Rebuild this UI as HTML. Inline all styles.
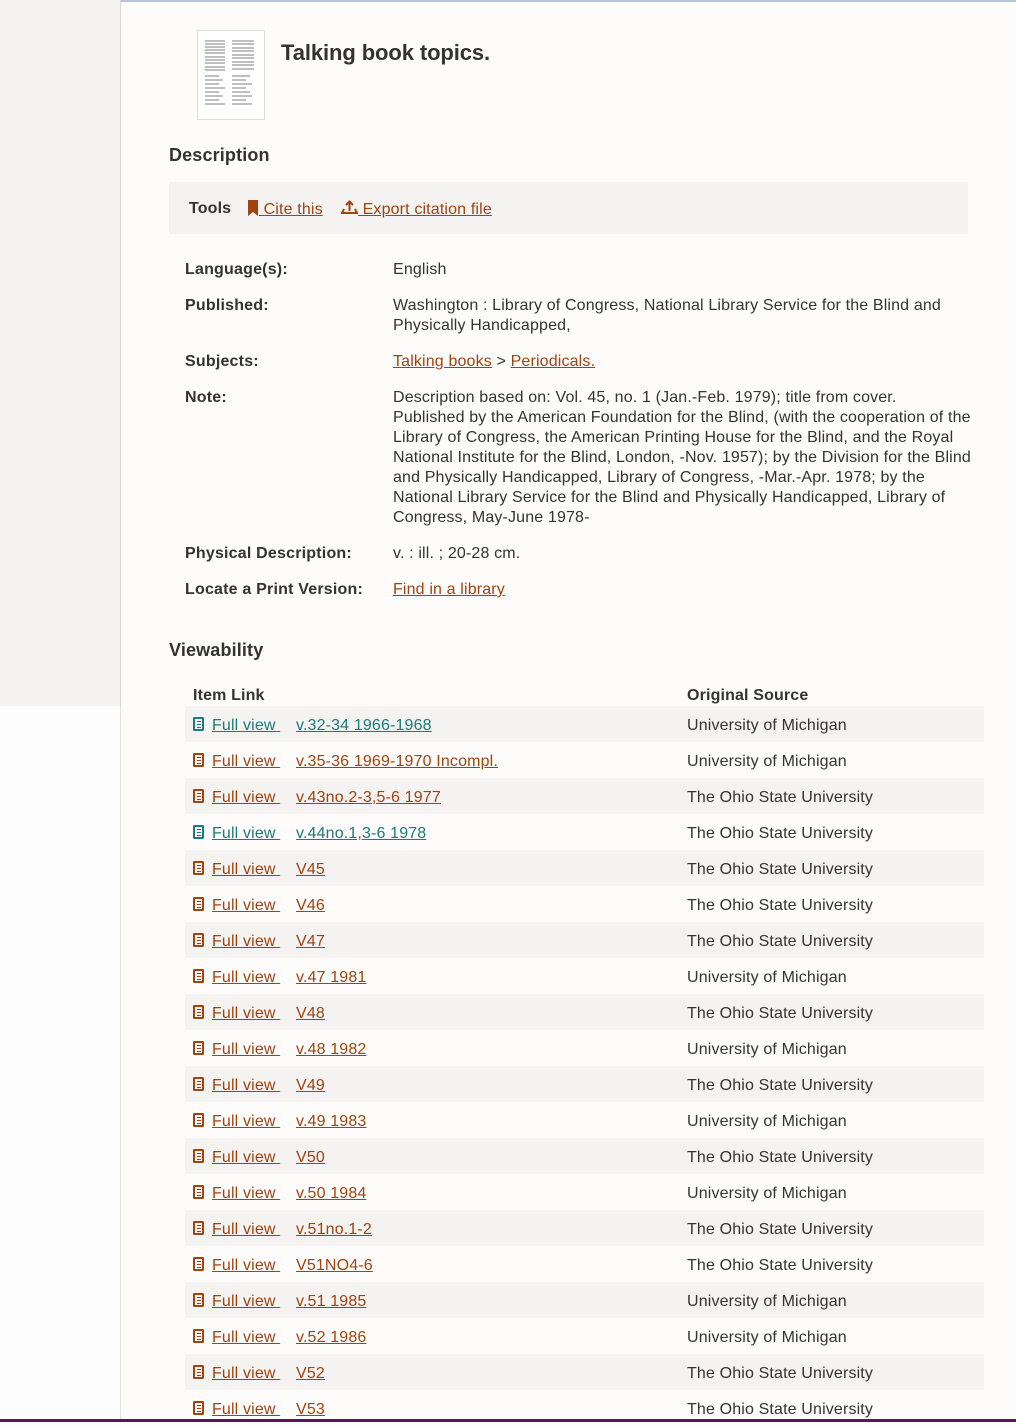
<!DOCTYPE html>
<html><head><meta charset="utf-8"><style>
*{margin:0;padding:0;box-sizing:border-box}
html,body{width:1016px;height:1422px;overflow:hidden;background:#fdfcfb;font-family:"Liberation Sans",sans-serif;color:#333;font-size:16px;letter-spacing:0.15px}
.abs{position:absolute;white-space:nowrap}
.left{position:absolute;left:0;top:0;width:121px;height:706px;background:#f4f3f2;border-right:1px solid #d8d8d8}
.left2{position:absolute;left:0;top:706px;width:121px;height:716px;background:#fdfdfd;border-right:1px solid #e0e0e0}
a{color:#a0430e;text-decoration:underline}
a.t{color:#1c7a78}
.lbl{font-weight:bold;left:185px;letter-spacing:0.2px}
.val{left:393px;line-height:20px}
.row{position:absolute;left:185px;width:799px;height:36px}
.row.s{background:#f4f3f2}
.row span{position:absolute;top:11px;white-space:nowrap;line-height:18px}
.ic{display:inline-block;width:11px;height:14px;border:2px solid currentColor;border-radius:1.5px;margin-right:8px;vertical-align:-1px;background:linear-gradient(currentColor,currentColor) 1.5px 2px/4px 1.4px no-repeat,linear-gradient(currentColor,currentColor) 1.5px 5px/4px 1.4px no-repeat,linear-gradient(currentColor,currentColor) 1.5px 8px/4px 1.4px no-repeat}
</style></head><body>
<div style="position:absolute;left:0;top:0;width:1016px;height:2px;background:#b7c4d3"></div>
<div class="left"></div><div class="left2"></div>
<div style="position:absolute;left:197px;top:30px;width:68px;height:90px;border:1px solid #ddd;background:#fff">
<svg width="66" height="88" viewBox="0 0 66 88"><g stroke="#999" stroke-width="1.2">
<path d="M7 10h20M7 13h20M7 16h20M7 19h20M7 22h20M7 26h20M7 29h20M7 32h20M7 36h20M7 39h20M34 10h22M34 13h22M34 17h22M34 20h22M34 24h22M34 27h22M34 31h22M34 34h22M34 38h22M7 45h14M7 49h18M7 53h14M7 57h20M7 61h14M7 65h18M7 69h14M7 73h20M34 45h18M34 49h14M34 53h20M34 57h14M34 61h18M34 65h20M34 69h14M34 73h20"/></g></svg></div>
<div class="abs" style="left:281px;top:40px;font-size:22px;font-weight:bold;color:#333;letter-spacing:-0.1px">Talking book topics.</div>
<div class="abs" style="left:169px;top:145px;font-size:18px;font-weight:bold">Description</div>
<div style="position:absolute;left:169px;top:182px;width:799px;height:52px;background:#f4f3f2"></div>
<div class="abs" style="left:189px;top:200px;font-weight:bold;font-size:16px">Tools</div>
<div class="abs" style="left:247px;top:200px;font-size:16px"><a href="#"><svg width="12" height="16" viewBox="0 0 12 16" style="vertical-align:-2px"><path d="M1 0h10v16l-5-4-5 4z" fill="#a0430e"/></svg> Cite this</a></div>
<div class="abs" style="left:341px;top:200px;font-size:16px"><a href="#"><svg width="17" height="16" viewBox="0 0 17 16" style="vertical-align:-2px" fill="none" stroke="#a0430e" stroke-width="2"><path d="M8.5 11V2M5 5l3.5-3.5L12 5M3 9l-2 4h15l-2-4"/></svg> Export citation file</a></div>
<div class="abs lbl" style="top:261px">Language(s):</div><div class="abs val" style="top:260px">English</div>
<div class="abs lbl" style="top:297px">Published:</div><div class="abs val" style="top:296px">Washington : Library of Congress, National Library Service for the Blind and<br>Physically Handicapped,</div>
<div class="abs lbl" style="top:353px">Subjects:</div><div class="abs val" style="top:352px"><a href="#">Talking books</a> &gt; <a href="#">Periodicals.</a></div>
<div class="abs lbl" style="top:389px">Note:</div><div class="abs val" style="top:388px">Description based on: Vol. 45, no. 1 (Jan.-Feb. 1979); title from cover.<br>Published by the American Foundation for the Blind, (with the cooperation of the<br>Library of Congress, the American Printing House for the Blind, and the Royal<br>National Institute for the Blind, London, -Nov. 1957); by the Division for the Blind<br>and Physically Handicapped, Library of Congress, -Mar.-Apr. 1978; by the<br>National Library Service for the Blind and Physically Handicapped, Library of<br>Congress, May-June 1978-</div>
<div class="abs lbl" style="top:545px">Physical Description:</div><div class="abs val" style="top:544px">v. : ill. ; 20-28 cm.</div>
<div class="abs lbl" style="top:581px">Locate a Print Version:</div><div class="abs val" style="top:580px"><a href="#">Find in a library</a></div>
<div class="abs" style="left:169px;top:640px;font-size:18px;font-weight:bold">Viewability</div>
<div class="abs" style="left:193px;top:687px;font-weight:bold;font-size:16px">Item Link</div>
<div class="abs" style="left:687px;top:687px;font-weight:bold;font-size:16px">Original Source</div>
<div class="row s" style="top:706px"><span style="left:8px"><a class="t" href="#"><i class="ic"></i>Full view&nbsp;</a></span><span style="left:111px"><a class="t" href="#">v.32-34 1966-1968</a></span><span style="left:502px">University of Michigan</span></div>
<div class="row" style="top:742px"><span style="left:8px"><a href="#"><i class="ic"></i>Full view&nbsp;</a></span><span style="left:111px"><a href="#">v.35-36 1969-1970 Incompl.</a></span><span style="left:502px">University of Michigan</span></div>
<div class="row s" style="top:778px"><span style="left:8px"><a href="#"><i class="ic"></i>Full view&nbsp;</a></span><span style="left:111px"><a href="#">v.43no.2-3,5-6 1977</a></span><span style="left:502px">The Ohio State University</span></div>
<div class="row" style="top:814px"><span style="left:8px"><a class="t" href="#"><i class="ic"></i>Full view&nbsp;</a></span><span style="left:111px"><a class="t" href="#">v.44no.1,3-6 1978</a></span><span style="left:502px">The Ohio State University</span></div>
<div class="row s" style="top:850px"><span style="left:8px"><a href="#"><i class="ic"></i>Full view&nbsp;</a></span><span style="left:111px"><a href="#">V45</a></span><span style="left:502px">The Ohio State University</span></div>
<div class="row" style="top:886px"><span style="left:8px"><a href="#"><i class="ic"></i>Full view&nbsp;</a></span><span style="left:111px"><a href="#">V46</a></span><span style="left:502px">The Ohio State University</span></div>
<div class="row s" style="top:922px"><span style="left:8px"><a href="#"><i class="ic"></i>Full view&nbsp;</a></span><span style="left:111px"><a href="#">V47</a></span><span style="left:502px">The Ohio State University</span></div>
<div class="row" style="top:958px"><span style="left:8px"><a href="#"><i class="ic"></i>Full view&nbsp;</a></span><span style="left:111px"><a href="#">v.47 1981</a></span><span style="left:502px">University of Michigan</span></div>
<div class="row s" style="top:994px"><span style="left:8px"><a href="#"><i class="ic"></i>Full view&nbsp;</a></span><span style="left:111px"><a href="#">V48</a></span><span style="left:502px">The Ohio State University</span></div>
<div class="row" style="top:1030px"><span style="left:8px"><a href="#"><i class="ic"></i>Full view&nbsp;</a></span><span style="left:111px"><a href="#">v.48 1982</a></span><span style="left:502px">University of Michigan</span></div>
<div class="row s" style="top:1066px"><span style="left:8px"><a href="#"><i class="ic"></i>Full view&nbsp;</a></span><span style="left:111px"><a href="#">V49</a></span><span style="left:502px">The Ohio State University</span></div>
<div class="row" style="top:1102px"><span style="left:8px"><a href="#"><i class="ic"></i>Full view&nbsp;</a></span><span style="left:111px"><a href="#">v.49 1983</a></span><span style="left:502px">University of Michigan</span></div>
<div class="row s" style="top:1138px"><span style="left:8px"><a href="#"><i class="ic"></i>Full view&nbsp;</a></span><span style="left:111px"><a href="#">V50</a></span><span style="left:502px">The Ohio State University</span></div>
<div class="row" style="top:1174px"><span style="left:8px"><a href="#"><i class="ic"></i>Full view&nbsp;</a></span><span style="left:111px"><a href="#">v.50 1984</a></span><span style="left:502px">University of Michigan</span></div>
<div class="row s" style="top:1210px"><span style="left:8px"><a href="#"><i class="ic"></i>Full view&nbsp;</a></span><span style="left:111px"><a href="#">v.51no.1-2</a></span><span style="left:502px">The Ohio State University</span></div>
<div class="row" style="top:1246px"><span style="left:8px"><a href="#"><i class="ic"></i>Full view&nbsp;</a></span><span style="left:111px"><a href="#">V51NO4-6</a></span><span style="left:502px">The Ohio State University</span></div>
<div class="row s" style="top:1282px"><span style="left:8px"><a href="#"><i class="ic"></i>Full view&nbsp;</a></span><span style="left:111px"><a href="#">v.51 1985</a></span><span style="left:502px">University of Michigan</span></div>
<div class="row" style="top:1318px"><span style="left:8px"><a href="#"><i class="ic"></i>Full view&nbsp;</a></span><span style="left:111px"><a href="#">v.52 1986</a></span><span style="left:502px">University of Michigan</span></div>
<div class="row s" style="top:1354px"><span style="left:8px"><a href="#"><i class="ic"></i>Full view&nbsp;</a></span><span style="left:111px"><a href="#">V52</a></span><span style="left:502px">The Ohio State University</span></div>
<div class="row" style="top:1390px"><span style="left:8px"><a href="#"><i class="ic"></i>Full view&nbsp;</a></span><span style="left:111px"><a href="#">V53</a></span><span style="left:502px">The Ohio State University</span></div>
<div style="position:absolute;left:0;top:1419px;width:1016px;height:3px;background:#5a1460"></div>
</body></html>
